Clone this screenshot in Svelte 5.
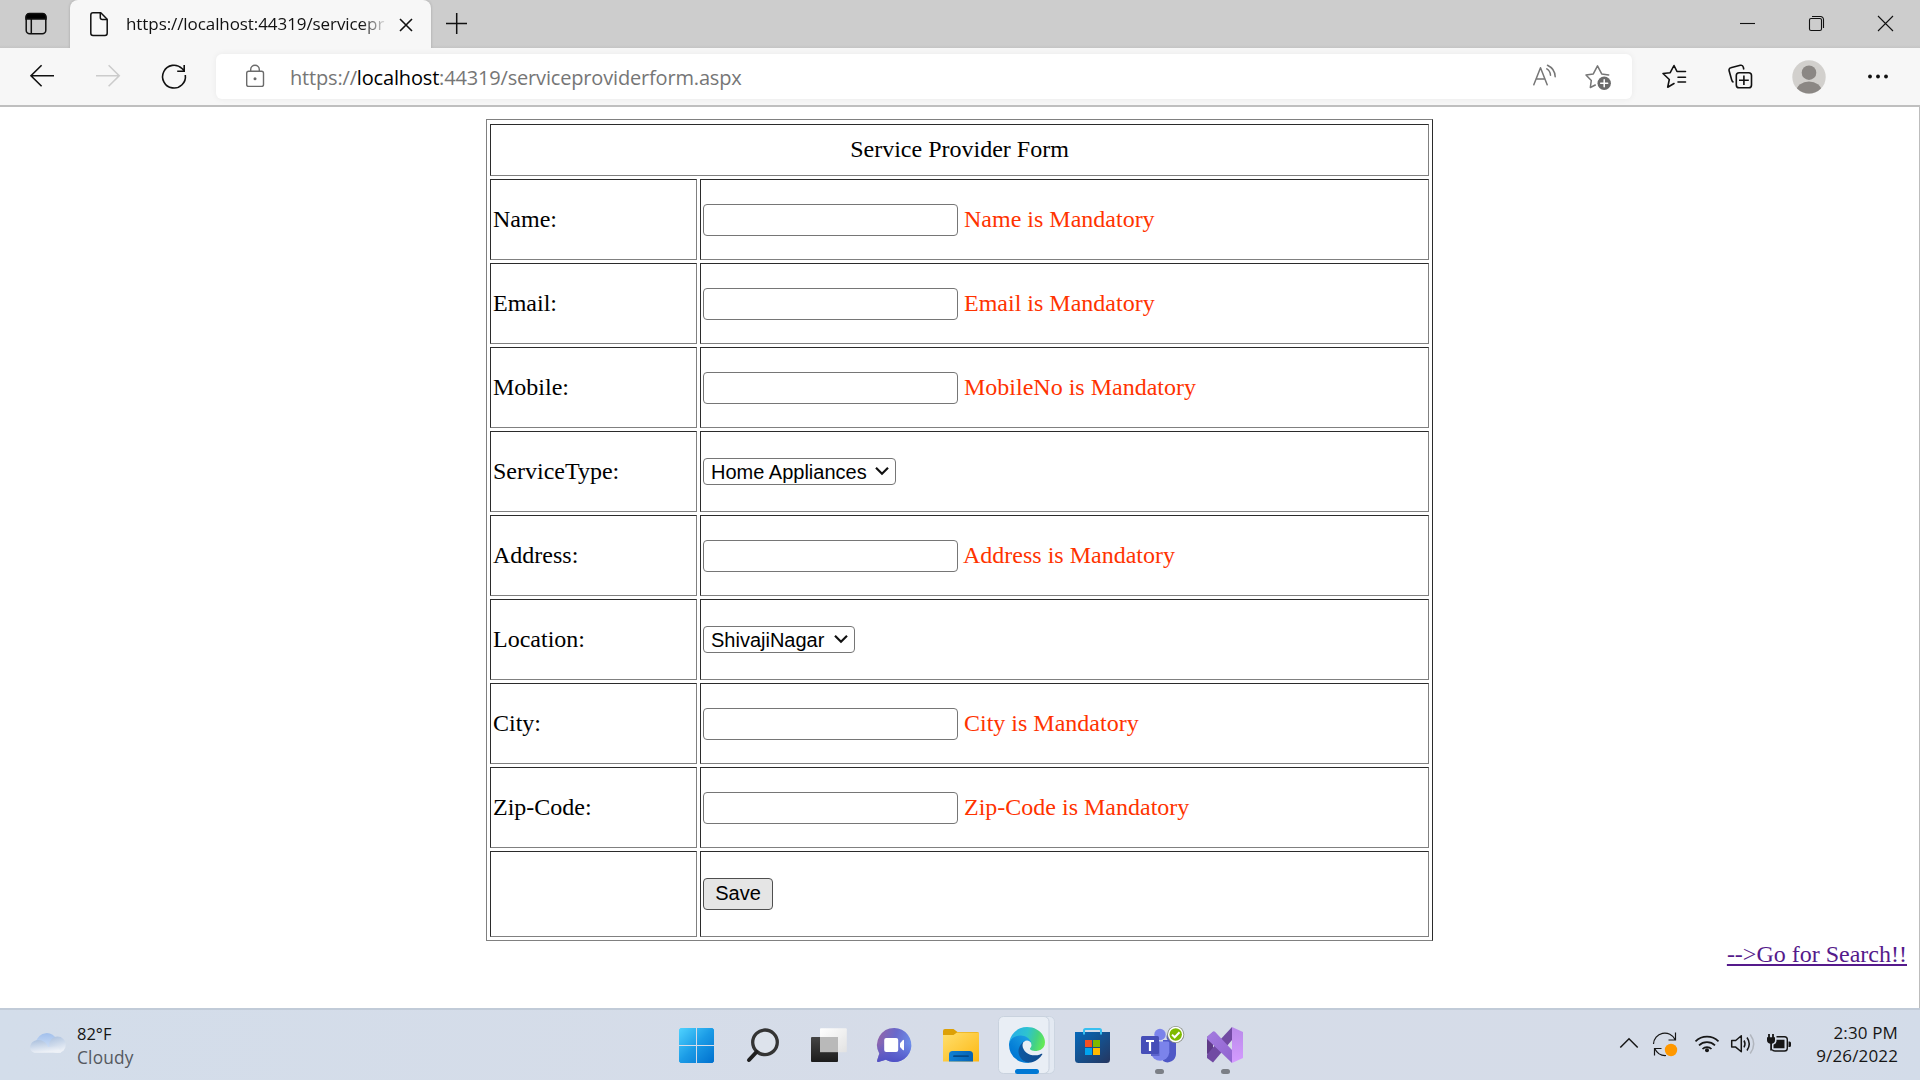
<script>
  const rows = [
    { label: 'Name:', error: 'Name is Mandatory' },
    { label: 'Email:', error: 'Email is Mandatory' },
    { label: 'Mobile:', error: 'MobileNo is Mandatory' },
    { label: 'ServiceType:', option: 'Home Appliances', size: 'wide' },
    { label: 'Address:', error: 'Address is Mandatory', kern: true },
    { label: 'Location:', option: 'ShivajiNagar', size: 'narrow' },
    { label: 'City:', error: 'City is Mandatory' },
    { label: 'Zip-Code:', error: 'Zip-Code is Mandatory' }
  ];
</script>

<div class="screen">
  <header class="tabs">
    <svg width="70" height="48" viewBox="0 0 70 48" fill="none" stroke="#111" stroke-width="1.5">
      <rect x="26.2" y="13.8" width="19.6" height="20" rx="3.5" />
      <path d="M26 19v-2a3.5 3.5 0 0 1 3.5-3.5h13A3.5 3.5 0 0 1 46 17v2z" fill="#000" />
      <path d="M31.3 19v14.5" />
    </svg>
    <div class="tab">
      <svg width="56" height="48" viewBox="70 0 56 48" fill="none" stroke="#111" stroke-width="1.5" stroke-linejoin="round">
        <path d="M93 12.8h7.8l6.4 6.4v14a2.2 2.2 0 0 1-2.2 2.2H93a2.2 2.2 0 0 1-2.2-2.2V15a2.2 2.2 0 0 1 2.2-2.2z" />
        <path d="M100.3 13v4.6a2 2 0 0 0 2 2h4.7" />
      </svg>
      <span class="title">https://localhost:44319/servicepr</span>
      <svg width="46" height="48" viewBox="385 0 46 48" stroke="#111" stroke-width="1.6">
        <path d="M400 19l12 12M412 19l-12 12" />
      </svg>
    </div>
    <svg width="69" height="48" viewBox="431 0 69 48" stroke="#111" stroke-width="1.5">
      <path d="M446 23.5h21M456.7 13v21" />
    </svg>
    <div class="space"></div>
    <svg width="207" height="48" viewBox="1713 0 207 48" fill="none" stroke="#111" stroke-width="1.1">
      <path d="M1740 23.5h15" />
      <rect x="1809.5" y="18.5" width="12" height="12" rx="1.6" />
      <path d="M1812 16.5h8.5a3 3 0 0 1 3 3V28" />
      <path d="M1878 16l15 15M1893 16l-15 15" />
    </svg>
  </header>

  <nav class="toolbar">
    <svg width="75" height="57" viewBox="0 48 75 57" fill="none" stroke="#111" stroke-width="1.6">
      <path d="M54 75.7H31M41.6 65.2L31 75.7l10.600 10.500" />
    </svg>
    <svg width="66" height="57" viewBox="75 48 66 57" fill="none" stroke="#ccc" stroke-width="1.6">
      <path d="M96 75.700h23M108.600 65.200L119.200 75.700l-10.600 10.500" />
    </svg>
    <svg width="75" height="57" viewBox="141 48 75 57" fill="none" stroke="#111" stroke-width="1.6">
      <path d="M185.300 75a11.400 11.400 0 1 1-3.300-6.500l2 2M184.200 65v6.200h-7" />
    </svg>
    <div class="address">
      <svg width="72" height="45" viewBox="216 54 72 45" fill="none" stroke="#6b6b6b" stroke-width="1.4">
        <rect x="246.700" y="71.200" width="16.800" height="15.200" rx="2" />
        <path d="M250.700 71v-1.500a4.300 4.300 0 0 1 8.600 0V71" />
        <circle cx="255" cy="78.700" r="1.500" fill="#6b6b6b" stroke="none" />
      </svg>
      <span class="url">https://<b>localhost</b>:44319/serviceproviderform.aspx</span>
      <div class="space"></div>
      <svg width="112" height="45" viewBox="1520 54 112 45" fill="none" stroke="#767676" stroke-width="1.5" stroke-linecap="round" stroke-linejoin="round">
        <path d="M1533.800 84.800l6.700-17 6.700 17M1536 79h9" />
        <path d="M1546.800 68.800q3.500 2 3.700 6.500M1547.500 65.300q7.500 3.500 7.700 11.500" />
        <path d="M1595.300 85l-5 2.500 1-7-5.300-5.500 7.300-1.100 4.200-8 4.200 8 7 1" />
        <circle cx="1604.200" cy="83.200" r="6.700" fill="#6b6b6b" stroke="none" />
        <path d="M1600.700 83.200h7M1604.200 79.700v7" stroke="#fff" />
      </svg>
    </div>
    <svg width="75" height="57" viewBox="1632 48 75 57" fill="none" stroke="#111" stroke-width="1.6" stroke-linejoin="round" stroke-linecap="round">
      <path d="M1674 83.500l-6.300 3.700 1.600-7.700-6.300-6 7.200-.800 3.800-7.200 3 6h8.500M1678 77.300h7.500M1678 82h7.500" />
    </svg>
    <svg width="66" height="57" viewBox="1707 48 66 57" fill="none" stroke="#111" stroke-width="1.6" stroke-linejoin="round">
      <path d="M1733.500 82.200a2.500 2.500 0 0 1-1.700-2l-2.700-9.500a2.300 2.300 0 0 1 1.700-2.900l9.500-2.500a2.500 2.500 0 0 1 3 1.800l.5 2.400" />
      <rect x="1736.300" y="72.700" width="15.200" height="15" rx="2.800" />
      <path d="M1743.900 75.500v9.600M1739 80.300h9.800" />
    </svg>
    <svg width="71" height="57" viewBox="1773 48 71 57">
      <defs><clipPath id="avatar"><circle cx="1809" cy="77" r="16.500" /></clipPath></defs>
      <circle cx="1809" cy="77" r="16.700" fill="#d2d0cd" />
      <circle cx="1809" cy="72.700" r="7.300" fill="#8b8784" />
      <ellipse cx="1809" cy="91" rx="12.500" ry="9.500" fill="#8b8784" clip-path="url(#avatar)" />
    </svg>
    <svg width="76" height="57" viewBox="1844 48 76 57" fill="#111">
      <circle cx="1870" cy="76.500" r="1.900" /><circle cx="1878" cy="76.500" r="1.900" /><circle cx="1886" cy="76.500" r="1.900" />
    </svg>
  </nav>

  <main>
    <form class="form">
      <div class="cell heading">Service Provider Form</div>
      {#each rows as row}
        <div class="cell">{row.label}</div>
        <div class="cell">
          {#if row.option}
            <span class="picker {row.size}">
              <select aria-label={row.label}><option>{row.option}</option></select>
              <svg width="16" height="10" viewBox="0 0 16 10" fill="none" stroke="#111" stroke-width="2.200"><path d="M2 1.800l6 6 6-6" /></svg>
            </span>
          {:else}
            <input type="text" aria-label={row.label} /><span class="error" class:kern={row.kern}>{row.error}</span>
          {/if}
        </div>
      {/each}
      <div class="cell"></div>
      <div class="cell"><button type="button">Save</button></div>
    </form>
    <a class="search" href="#search">--&gt;Go for Search!!</a>
  </main>

  <footer>
    <div class="weather">
      <svg width="40" height="40" viewBox="28 1024 40 40">
        <defs>
          <linearGradient id="c1" x1="0" y1="0" x2="0" y2="1"><stop offset="0" stop-color="#a2c0ec" /><stop offset="1" stop-color="#d3e2f7" /></linearGradient>
          <linearGradient id="c2" x1="0" y1="0" x2="0.300" y2="1"><stop offset="0" stop-color="#a9bfdd" /><stop offset="1" stop-color="#edf1f7" /></linearGradient>
        </defs>
        <path d="M36 1042a11 11 0 0 1 21-2l-3 10H38z" fill="url(#c1)" />
        <circle cx="57.500" cy="1044.800" r="8.300" fill="url(#c2)" />
        <path d="M38 1040c5 0 9 3 10 7l10-1 3 6.800H36c-8 0-8-12 2-12.800z" fill="url(#c2)" />
      </svg>
      <div class="forecast"><span>82°F</span><span class="dim">Cloudy</span></div>
    </div>

    <div class="apps">
      <svg width="66" height="72" viewBox="664 1008 66 72">
        <defs><linearGradient id="w" gradientUnits="userSpaceOnUse" x1="679" y1="1028" x2="714" y2="1063"><stop offset="0" stop-color="#4fd3ff" /><stop offset=".5" stop-color="#1b9be6" /><stop offset="1" stop-color="#0070ce" /></linearGradient></defs>
        <path fill="url(#w)" d="M680.500 1028H696v17h-17v-15.500zM697 1028h15.500l1.500 1.500V1045h-17zM679 1046h17v17h-15.500l-1.500-1.500zM697 1046h17v15.500l-1.500 1.500H697z" />
      </svg>
      <svg width="66" height="72" viewBox="730 1008 66 72" fill="none">
        <circle cx="765" cy="1042.300" r="12.300" fill="#dde3ec" stroke="#343434" stroke-width="3.300" />
        <path d="M756.500 1052l-7.500 8" stroke="#1f1f1f" stroke-width="4" stroke-linecap="round" />
      </svg>
      <svg width="66" height="72" viewBox="796 1008 66 72">
        <defs>
          <linearGradient id="t1" x1="0" y1="0" x2="0" y2="1"><stop offset="0" stop-color="#454545" /><stop offset="1" stop-color="#1c1c1c" /></linearGradient>
          <linearGradient id="t2" x1="0" y1="0" x2="1" y2="1"><stop offset="0" stop-color="#fff" /><stop offset="1" stop-color="#e2e2e2" /></linearGradient>
        </defs>
        <rect x="820" y="1028.200" width="26.800" height="24" rx="1" fill="url(#t2)" />
        <rect x="811" y="1037" width="27" height="25" rx="1" fill="url(#t1)" />
        <path d="M820 1037h18v15.200h-18z" fill="#b9b9b9" />
      </svg>
      <svg width="66" height="72" viewBox="862 1008 66 72">
        <defs>
          <linearGradient id="m" x1="0" y1=".2" x2="1" y2=".5"><stop offset="0" stop-color="#9364a9" /><stop offset=".5" stop-color="#6869cb" /><stop offset="1" stop-color="#6e91ec" /></linearGradient>
          <linearGradient id="m2" x1="0" y1="0" x2="0" y2="1"><stop offset=".45" stop-color="#5756c9" stop-opacity="0" /><stop offset="1" stop-color="#5051c5" /></linearGradient>
        </defs>
        <path d="M894.300 1028a17 17 0 1 1-8.500 31.700l-7.500 2.300q-1.500 0-1.200-1.600l2.200-7A17 17 0 0 1 894.300 1028z" fill="url(#m)" />
        <path d="M894.300 1028a17 17 0 1 1-8.500 31.700l-7.500 2.300q-1.500 0-1.200-1.600l2.200-7A17 17 0 0 1 894.300 1028z" fill="url(#m2)" />
        <rect x="884.200" y="1038" width="14" height="14" rx="2" fill="#fff" />
        <path d="M900 1043.200l2.800-3q1.200-.900 1.200.6v8.600q0 1.500-1.200.6l-2.800-3z" fill="#fff" />
      </svg>
      <svg width="66" height="72" viewBox="928 1008 66 72">
        <defs>
          <linearGradient id="f" x1="0" y1="0" x2="1" y2="1"><stop offset="0" stop-color="#ffdf6d" /><stop offset="1" stop-color="#fdb813" /></linearGradient>
          <linearGradient id="f2" x1="0" y1="0" x2="1" y2="0"><stop offset="0" stop-color="#0f80d4" /><stop offset="1" stop-color="#0663b4" /></linearGradient>
        </defs>
        <path d="M943 1031q0-2 2-2h8.500l4 3H977q2 0 2 1.500v4h-36z" fill="#dda006" />
        <path d="M943 1035h10.500l3.500-2.500h21q1 0 1 1v28H943z" fill="url(#f)" />
        <path d="M949 1061.500v-7q0-3.500 3.500-3.500h17q3.500 0 3.500 3.500v7z" fill="url(#f2)" />
        <path d="M954 1056.200h14" stroke="#034988" stroke-width="1.800" stroke-linecap="round" />
      </svg>
      <svg width="66" height="72" viewBox="994 1008 66 72">
        <defs>
          <linearGradient id="e1" gradientUnits="userSpaceOnUse" x1="58" y1="177" x2="236" y2="177"><stop offset="0" stop-color="#0c59a4" /><stop offset="1" stop-color="#114a8b" /></linearGradient>
          <linearGradient id="e2" gradientUnits="userSpaceOnUse" x1="157" y1="100" x2="46" y2="221"><stop offset="0" stop-color="#1b9de2" /><stop offset=".2" stop-color="#1595df" /><stop offset=".7" stop-color="#0680d7" /><stop offset="1" stop-color="#0078d4" /></linearGradient>
          <linearGradient id="e3" gradientUnits="userSpaceOnUse" x1="10" y1="60" x2="245" y2="130"><stop offset="0" stop-color="#27afe8" /><stop offset=".45" stop-color="#2ec3cf" /><stop offset=".75" stop-color="#44d283" /><stop offset="1" stop-color="#66eb55" /></linearGradient>
        </defs>
        <rect x="1003" y="1016.500" width="51.500" height="57" rx="5" fill="#e3e9f2" stroke="#ccd5e1" />
        <rect x="998.500" y="1016.500" width="50.500" height="57" rx="5" fill="#e9eef5" stroke="#c9d2de" />
        <g transform="translate(1009 1027) scale(.1406)">
          <path fill="url(#e1)" d="M231 190.500c-3.400 1.800-6.900 3.400-10.500 4.700a101.500 101.500 0 0 1-35.900 6.500c-47.300 0-88.500-32.500-88.500-74.300a31.500 31.500 0 0 1 16.400-27.300c-42.800 1.800-53.800 46.400-53.800 72.500 0 73.900 68.100 81.400 82.800 81.400 7.900 0 19.800-2.300 27-4.600l1.300-.4a128.300 128.300 0 0 0 66.600-52.800 4 4 0 0 0-5.400-5.700z" />
          <path fill="url(#e2)" d="M105.700 241.500a79.200 79.200 0 0 1-22.700-21.300 80.700 80.700 0 0 1 29.500-120c3.200-1.500 8.500-4.100 15.600-4a32.400 32.400 0 0 1 25.700 13 31.900 31.900 0 0 1 6.300 18.700c0-.2 24.500-79.600-80-79.600-43.900 0-80 41.600-80 78.200a130.200 130.200 0 0 0 12.100 56 128 128 0 0 0 156.400 67 75.500 75.500 0 0 1-62.800-8z" />
          <path fill="url(#e3)" d="M152.300 148.900c-.9 1-3.400 2.500-3.400 5.600 0 2.600 1.700 5.200 4.800 7.300 14.300 10 41.400 8.600 41.500 8.600a59.600 59.600 0 0 0 30.300-8.300 61.400 61.400 0 0 0 30.400-52.900c.3-22.400-8-37.300-11.300-43.900C223.500 23.900 177.700 0 128 0A128 128 0 0 0 0 126.200c.5-36.500 36.800-66 80-66 3.500 0 23.500.3 42 10a72.600 72.600 0 0 1 30.900 29.300c6.100 10.600 7.200 24.100 7.200 29.500s-2.700 13.300-7.800 19.900z" />
        </g>
        <rect x="1015" y="1069" width="24" height="5" rx="2.500" fill="#0078d4" />
      </svg>
      <svg width="66" height="72" viewBox="1060 1008 66 72">
        <defs><linearGradient id="s" x1="0" y1="0" x2="1" y2="1"><stop offset="0" stop-color="#0669ba" /><stop offset="1" stop-color="#25365f" /></linearGradient></defs>
        <path d="M1075 1032h35v27.500q0 3.500-3.500 3.500h-28q-3.500 0-3.500-3.500z" fill="url(#s)" />
        <path d="M1084 1034.500v-4q0-1.500 1.500-1.500h14q1.500 0 1.500 1.500v4" fill="none" stroke="#37bff0" stroke-width="2" />
        <path fill="#f25022" d="M1085 1040h7v7h-7z" /><path fill="#7fba00" d="M1093 1040h7v7h-7z" />
        <path fill="#00a4ef" d="M1085 1048h7v7h-7z" /><path fill="#ffb900" d="M1093 1048h7v7h-7z" />
      </svg>
      <svg width="66" height="72" viewBox="1126 1008 66 72">
        <circle cx="1171" cy="1037" r="4.500" fill="#5059c9" />
        <path d="M1163 1040h11q2 0 2 2v12a8.500 8.500 0 0 1-13 7z" fill="#4f58c6" />
        <circle cx="1160" cy="1034.500" r="5.700" fill="#7b83eb" />
        <path d="M1151 1041.500h17q1.300 0 1.300 1.500v9.500a9.200 9.200 0 0 1-18.300 0z" fill="#7b83eb" />
        <path d="M1151 1041.500h8.500v14.500h-8.500z" fill="#5c64cc" />
        <rect x="1141" y="1036" width="18" height="18" rx="1.500" fill="#464eb8" />
        <path d="M1146 1041h8M1150 1041v10" stroke="#fff" stroke-width="2.200" />
        <circle cx="1175.700" cy="1034.500" r="8.600" fill="#8b9086" />
        <circle cx="1175.700" cy="1034.500" r="7.700" fill="#fff" />
        <circle cx="1175.700" cy="1034.500" r="6.200" fill="#7fba00" />
        <path d="M1172 1034.600l2.700 2.700 4.800-5" fill="none" stroke="#fff" stroke-width="2" />
        <rect x="1155" y="1069" width="9" height="5" rx="2.500" fill="#7b7f86" />
      </svg>
      <svg width="66" height="72" viewBox="1192 1008 66 72">
        <defs>
          <linearGradient id="v" x1="0" y1="0" x2="1" y2="1"><stop offset="0" stop-color="#a47be0" /><stop offset="1" stop-color="#9063cf" /></linearGradient>
          <linearGradient id="v2" x1="0" y1="0" x2="0" y2="1"><stop offset="0" stop-color="#b98aea" /><stop offset="1" stop-color="#d59bff" /></linearGradient>
        </defs>
        <path d="M1207 1037l6-5v26l-6-4.500z" fill="#5e3a86" />
        <path d="M1213 1047.500L1232 1027v13l-19 22.500-6-4.500v-3.500z" fill="#714aa3" />
        <path d="M1207 1037l6-5.500q1-.700 2 .3L1232 1050v13L1207 1039z" fill="url(#v)" />
        <path d="M1232 1027l11 5v26l-11 5z" fill="url(#v2)" />
        <rect x="1221" y="1069" width="9" height="5" rx="2.500" fill="#7b7f86" />
      </svg>
    </div>

    <div class="tray">
      <svg width="180" height="72" viewBox="1614 1008 180 72" fill="none" stroke="#161616" stroke-width="1.500">
        <path d="M1620.300 1047.500l8.700-8.700 8.700 8.700" />
        <path d="M1653.500 1044a11.300 11.300 0 0 1 21.500-4.500M1675.500 1032.500v7.500h-7M1654.500 1055.500v-7h7M1655 1049q3.500 7 11 6.500" stroke-width="1.200" />
        <circle cx="1671" cy="1050" r="6.200" fill="#ff9800" stroke="none" />
        <path d="M1695.500 1041.300a16.500 16.500 0 0 1 23 0M1699 1045.300a11.500 11.500 0 0 1 16 0M1702.500 1049a6.500 6.500 0 0 1 9 0" stroke-width="1.700" />
        <circle cx="1707" cy="1050.300" r="2" fill="#161616" stroke="none" />
        <path d="M1731.700 1040.500h4l5.600-4.700v16l-5.600-4.700h-4z" stroke-linejoin="round" />
        <path d="M1744 1040.500q2 3.400 0 6.800M1747 1037.500q4.500 6.500 0 13" />
        <path d="M1750.200 1034.500q7 9.500 0 19" stroke="#b1b6be" />
        <path d="M1776.500 1036.700h8q2.800 0 2.800 2.800v8.700q0 2.800-2.800 2.800h-9.500q-2.300 0-2.800-1.500" stroke-width="1.400" />
        <path d="M1776.500 1039.700h8v8.600h-11v-3.500q3-1.500 3-3.500zM1788.500 1041.500h1q1.500 0 1.500 1.500v2.500q0 1.500-1.500 1.500h-1zM1767 1037.200h8v3q0 2.800-3 3.600v6.700h-1.800v-6.700q-3.200-.8-3.200-3.600z" fill="#161616" stroke="none" />
        <path d="M1769 1034v4M1773 1034v4" stroke-width="1.800" />
      </svg>
      <div class="clock"><span>2:30 PM</span><span>9/26/2022</span></div>
    </div>
  </footer>
</div>

<style>
  :global(body) { margin: 0; background: #fff; }
  svg { display: block; flex: none; }
  .screen { width: 1920px; height: 1080px; display: flex; flex-direction: column; overflow: hidden; font-family: 'Open Sans', 'Noto Sans', sans-serif; }
  .space { flex: 1; }

  .tabs { height: 48px; display: flex; background: linear-gradient(#cdcdcd 45px, #c4c4c4); flex: none; }
  .tab { width: 361px; display: flex; background: #f7f7f7; border-radius: 8px 8px 0 0; box-shadow: 0 0 3px #0003; }
  .title { width: 259px; white-space: nowrap; font-size: 17px; line-height: 47px; letter-spacing: -0.08px; color: #111; -webkit-mask-image: linear-gradient(90deg, #000 235px, transparent 262px); mask-image: linear-gradient(90deg, #000 235px, transparent 262px); }

  .toolbar { position: relative; height: 57px; display: flex; background: #f7f7f7; border-bottom: 2px solid #bfbfbf; flex: none; }
  .address { flex: 1; height: 45px; margin-top: 6px; display: flex; background: #fff; border-radius: 6px; box-shadow: 0 0 6px #0000000f; }
  .url { font-size: 20px; line-height: 45px; padding: 1px 0 0 2px; height: 44px; letter-spacing: -0.17px; color: #767676; white-space: nowrap; }
  .url b { font-weight: 400; color: #000; }

  main { flex: 1; display: flex; flex-direction: column; border-right: 1px solid #bdbdbd; font: 24px/28px 'Liberation Serif', 'Times New Roman', serif; color: #000; }
  .form { box-sizing: border-box; width: 947px; height: 822px; margin: 12px 0 0 486px; padding: 4px 3px 3px; border: 1px solid #808080; border-right-color: #2b2b2b; display: grid; grid-template-columns: 207px 729px; grid-template-rows: 52px repeat(8, 81px) 86px; gap: 3px; }
  .cell { box-sizing: border-box; display: flex; align-items: center; padding: 0 2px 1px; border: 1px solid #808080; border-top-color: #2b2b2b; border-left-color: #2b2b2b; }
  .heading { grid-column: span 2; justify-content: center; padding-bottom: 2px; }
  input { box-sizing: border-box; width: 255px; height: 32px; margin: 2px 0 0; padding: 2px 3px; border: 1px solid #767676; border-radius: 4px; background: #fff; font: 20px 'Liberation Sans', Arial, sans-serif; }
  .error { margin-left: 6px; color: #ff3300; }
  .error.kern { margin-left: 5px; }
  .picker { position: relative; display: flex; height: 27px; margin-top: 1px; }
  .wide { width: 193px; }
  .narrow { width: 152px; }
  select { appearance: none; box-sizing: border-box; width: 100%; margin: 0; padding: 2px 0 0 7px; border: 1px solid #767676; border-radius: 4px; background: #fff; color: #000; font: 20px/23px 'Liberation Sans', Arial, sans-serif; }
  .picker svg { position: absolute; right: 6px; top: 8px; }
  button { box-sizing: border-box; width: 70px; height: 32px; margin: 0; padding: 0 0 2px; border: 1px solid #4f4f4f; border-radius: 4px; background: #e5e5e5; color: #000; font: 20px/28px 'Liberation Sans', Arial, sans-serif; }
  .search { align-self: flex-end; margin: -1px 12px 0 0; color: #551a8b; text-decoration-thickness: 2px; text-underline-offset: 2px; }

  footer { box-sizing: border-box; height: 72px; flex: none; display: flex; background: linear-gradient(90deg, #d3ddea, #d6dce8 50%, #d5dce8 90%, #d3dce9); box-shadow: inset 0 2px #c1cbd8; }
  .weather { width: 664px; display: flex; box-sizing: border-box; padding: 16px 0 0 28px; }
  .forecast { display: flex; flex-direction: column; padding-left: 9px; margin-top: -2px; font-size: 16.500px; line-height: 24px; color: #161616; }
  .dim { color: #55595f; font-size: 17.300px; letter-spacing: 0.2px; }
  .apps { display: flex; width: 950px; }
  .tray { display: flex; flex: 1; }
  .clock { flex: 1; display: flex; flex-direction: column; align-items: flex-end; padding: 13px 22px 0 0; font-size: 17px; line-height: 23px; letter-spacing: 0.15px; color: #161616; white-space: nowrap; }
</style>
